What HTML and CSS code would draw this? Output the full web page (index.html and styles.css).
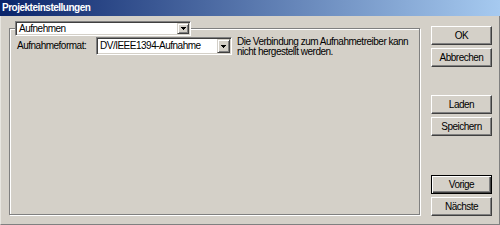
FILE: index.html
```html
<!DOCTYPE html>
<html lang="de">
<head>
<meta charset="utf-8">
<title>Projekteinstellungen</title>
<link rel="stylesheet" href="styles.css">
</head>
<body>
<div class="window">
  <div class="titlebar">Projekteinstellungen</div>
  <div class="main">
    <div class="group">
      <div class="combo combo-legend">
        <span class="combo-text">Aufnehmen</span>
        <span class="combo-btn"><svg class="tri" width="5" height="3" viewBox="0 0 5 3"><path d="M0 0h5v1H0zM1 1h3v1H1zM2 2h1v1H2z" fill="#000"/></svg></span>
      </div>
      <div class="row">
        <span class="label">Aufnahmeformat:</span>
        <div class="combo combo-format">
          <span class="combo-text">DV/IEEE1394-Aufnahme</span>
          <span class="combo-btn"><svg class="tri" width="5" height="3" viewBox="0 0 5 3"><path d="M0 0h5v1H0zM1 1h3v1H1zM2 2h1v1H2z" fill="#000"/></svg></span>
        </div>
        <p class="msg">Die Verbindung zum Aufnahmetreiber kann<br>nicht hergestellt werden.</p>
      </div>
    </div>
    <div class="buttons">
      <div class="btn-group">
        <div class="btn">OK</div>
        <div class="btn">Abbrechen</div>
      </div>
      <div class="btn-group mid">
        <div class="btn">Laden</div>
        <div class="btn">Speichern</div>
      </div>
      <div class="btn-group low">
        <div class="btn btn-default">Vorige</div>
        <div class="btn">Nächste</div>
      </div>
    </div>
  </div>
</div>
</body>
</html>
```
FILE: styles.css
```css
* { box-sizing: border-box; }
html, body { margin: 0; padding: 0; }
body {
  width: 500px;
  height: 225px;
  overflow: hidden;
  background: #d4d0c8;
  font-family: "Liberation Sans", Arial, sans-serif;
  font-size: 10px;
  letter-spacing: -0.5px;
  color: #000;
}
.window {
  width: 500px;
  height: 225px;
  display: flex;
  flex-direction: column;
  background: #d4d0c8;
  border-bottom: 1px solid #808080;
  border-right: 1px solid #808080;
  border-left: 1px solid #e8e6e0;
}
.titlebar {
  height: 16px;
  line-height: 16px;
  padding-left: 2px;
  color: #fff;
  font-weight: bold;
  background: linear-gradient(to right, #0a246a, #a6caf0);
  margin-left: -1px;
  margin-right: -1px;
}
.main {
  display: flex;
  padding-left: 8px;
}
.group {
  width: 411px;
  height: 187px;
  margin-top: 12px;
  border: 1px solid #808080;
  box-shadow: inset 1px 1px 0 #fff, 1px 1px 0 #fff;
  display: flex;
  flex-direction: column;
  align-items: flex-start;
}
.combo {
  display: flex;
  background: #fff;
  border: 1px solid;
  border-color: #808080 #fff #fff #808080;
  box-shadow: inset 1px 1px 0 #404040, inset -1px -1px 0 #d4d0c8;
  padding: 1px;
}
.combo-text {
  flex: 1;
  padding-left: 2px;
  white-space: nowrap;
  overflow: hidden;
}
.combo-btn {
  display: flex;
  align-items: center;
  justify-content: center;
  background: #d4d0c8;
  border: 1px solid;
  border-color: #d4d0c8 #404040 #404040 #d4d0c8;
  box-shadow: inset 1px 1px 0 #fff, inset -1px -1px 0 #808080;
}
.tri { display: block; }
.combo-legend {
  width: 176px;
  height: 15px;
  margin-top: -8px;
  margin-left: 5px;
  line-height: 11px;
}
.combo-legend .combo-btn { width: 12px; }
.row {
  display: flex;
  align-items: flex-start;
  margin-top: 1px;
  padding-left: 7px;
}
.label {
  width: 79px;
  height: 18px;
  line-height: 18px;
  white-space: nowrap;
}
.combo-format {
  width: 136px;
  height: 18px;
  line-height: 14px;
}
.combo-format .combo-btn { width: 13px; }
.msg {
  margin: 0 0 0 5px;
  line-height: 10px;
  white-space: nowrap;
}
.buttons {
  width: 61px;
  margin-left: 11px;
  margin-top: 10px;
  display: flex;
  flex-direction: column;
}
.btn-group {
  display: flex;
  flex-direction: column;
  gap: 3px;
}
.btn-group.mid { margin-top: 28px; }
.btn-group.low { margin-top: 39px; }
.btn {
  height: 19px;
  line-height: 17px;
  text-align: center;
  border: 1px solid;
  border-color: #fff #404040 #404040 #fff;
  box-shadow: inset -1px -1px 0 #808080, inset 1px 1px 0 #d4d0c8;
}
.btn-default {
  border-color: #000;
  box-shadow: inset 1px 1px 0 #fff, inset -1px -1px 0 #404040, inset -2px -2px 0 #808080;
}
```
